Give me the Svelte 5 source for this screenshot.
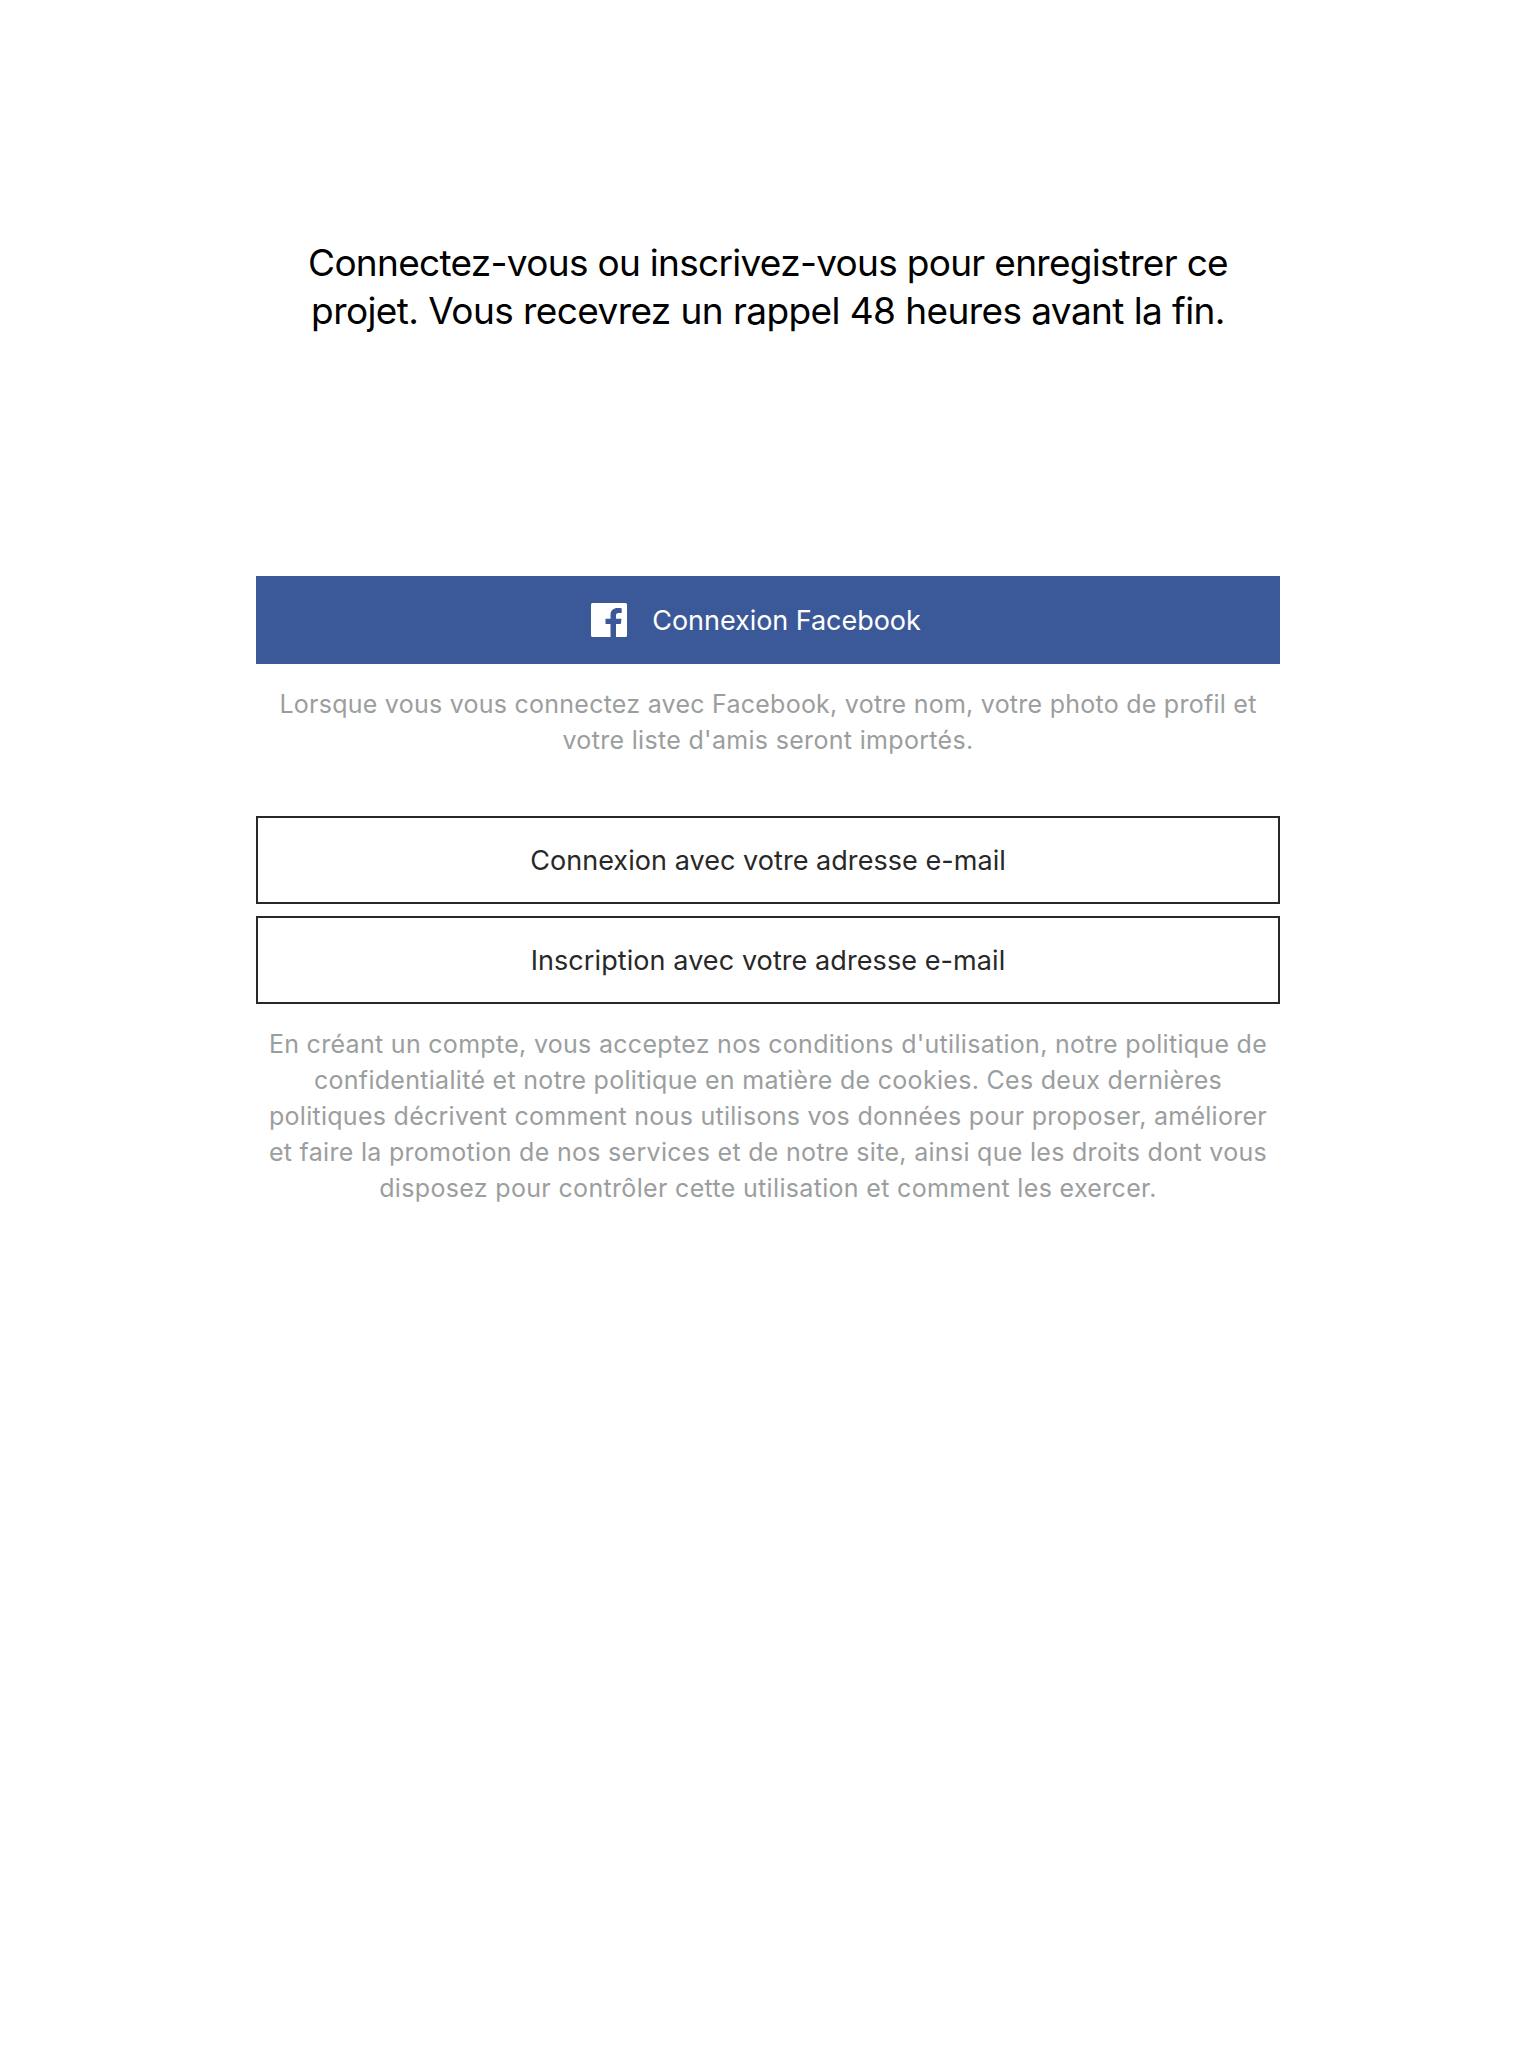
<script>
  // Each line carries its own tracking, in pixels.
  const heading = [
    ['Connectez-vous ou inscrivez-vous pour enregistrer ce', -0.706],
    ['projet. Vous recevrez un rappel 48 heures avant la fin.', -0.588]
  ];
  const facebookHint = [
    ['Lorsque vous vous connectez avec Facebook, votre nom, votre photo de profil et', 0.251],
    ["votre liste d'amis seront importés.", 0.318]
  ];
  const emailActions = [
    ['Connexion avec votre adresse e-mail', 0.05],
    ['Inscription avec votre adresse e-mail', 0.085]
  ];
  const legal = [
    ["En créant un compte, vous acceptez nos conditions d'utilisation, notre politique de", 0.297],
    ['confidentialité et notre politique en matière de cookies. Ces deux dernières', 0.298],
    ['politiques décrivent comment nous utilisons vos données pour proposer, améliorer', 0.276],
    ['et faire la promotion de nos services et de notre site, ainsi que les droits dont vous', 0.298],
    ['disposez pour contrôler cette utilisation et comment les exercer.', 0.33]
  ];
</script>

{#snippet lines(items)}
  {#each items as [text, tracking]}
    <span class="line" style:letter-spacing="{tracking}px">{text}</span>
  {/each}
{/snippet}

<main class="screen">
  <h1 class="heading">{@render lines(heading)}</h1>

  <section class="actions">
    <button class="button facebook">
      <svg class="logo" viewBox="0 0 36 34" aria-hidden="true">
        <path
          fill="#fff"
          d="M1.500 0H34.500A1.500 1.500 0 0 1 36 1.500V32.500A1.500 1.500 0 0 1 34.500 34H25V21H29.800L30.500 15.800H25V12.500C25 10.900 25.600 10 27.700 10H30.700V5.200C30.100 5.100 28.500 5 26.700 5C22.500 5 19.500 7.400 19.500 11.900V15.800H14.500V21H19.500V34H1.500A1.500 1.500 0 0 1 0 32.500V1.500A1.500 1.500 0 0 1 1.500 0Z"
        />
      </svg>
      <span class="label facebook-label">Connexion Facebook</span>
    </button>
    <p class="note">{@render lines(facebookHint)}</p>

    <div class="email">
      {#each emailActions as [text, tracking]}
        <button class="button outline">
          <span class="label" style:letter-spacing="{tracking}px">{text}</span>
        </button>
      {/each}
    </div>
    <p class="note">{@render lines(legal)}</p>
  </section>
</main>

<style>
  :global(body) {
    background: #fff;
  }
  .screen {
    box-sizing: border-box;
    min-height: 2048px;
    padding-top: 239px;
    display: flex;
    flex-direction: column;
    align-items: center;
    background: #fff;
    font-family: Inter, 'Liberation Sans', sans-serif;
  }
  .heading {
    margin: 0;
    font-size: 37px;
    font-weight: 400;
    line-height: 48px;
    text-align: center;
    color: #000;
  }
  .line {
    display: block;
    white-space: nowrap;
  }
  .actions {
    width: 1024px;
    margin-top: 241px;
  }
  .button {
    box-sizing: border-box;
    width: 100%;
    height: 88px;
    padding: 0;
    display: flex;
    align-items: center;
    justify-content: center;
    border: 0;
    border-radius: 0;
    font-family: inherit;
    font-size: 27px;
    line-height: 36px;
  }
  .label {
    padding-top: 2px;
  }
  .facebook {
    gap: 25px;
    padding-right: 24px;
    background: #3b5998;
    color: #fff;
  }
  .logo {
    width: 36px;
    height: 34px;
  }
  .facebook-label {
    letter-spacing: -0.05px;
  }
  .outline {
    border: 2px solid #282828;
    background: #fff;
    color: #282828;
  }
  .note {
    margin: 22px 0 0;
    font-size: 25px;
    line-height: 36px;
    text-align: center;
    color: #9b9e9e;
  }
  .email {
    margin-top: 58px;
    display: flex;
    flex-direction: column;
    gap: 12px;
  }
</style>
